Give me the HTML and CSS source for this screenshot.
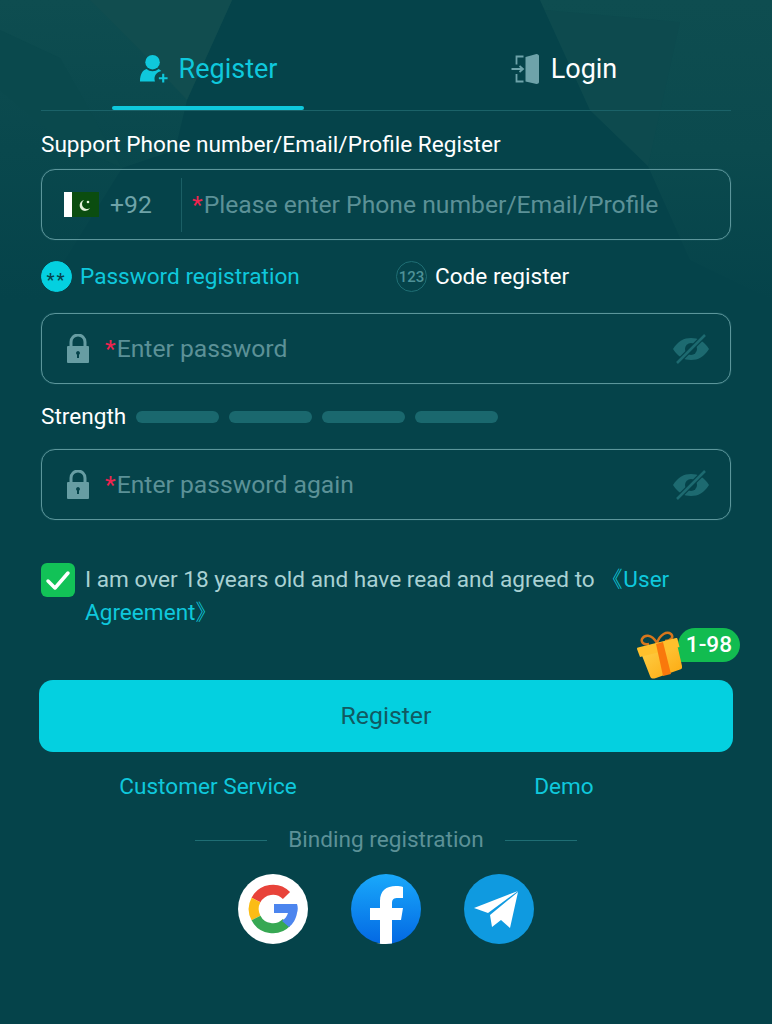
FILE: index.html
```html
<!DOCTYPE html>
<html>
<head>
    <title>Register</title>
    <link rel="stylesheet" href="styles.css">
</head>
<body>
    <svg class="backdrop" viewBox="0 0 772 300">
        <defs>
            <linearGradient id="fade_left" x1="0" y1="0" x2="0" y2="1">
                <stop offset="0" stop-color="#0e4d50"/>
                <stop offset="0.5" stop-color="#09484d"/>
                <stop offset="1" stop-color="#05434a"/>
            </linearGradient>
            <linearGradient id="fade_right" x1="0" y1="0" x2="0" y2="1">
                <stop offset="0" stop-color="#0e4d50"/>
                <stop offset="0.5" stop-color="#0b4a4e"/>
                <stop offset="1" stop-color="#05434a"/>
            </linearGradient>
        </defs>
        <polygon points="0,0 232,0 187,100 175,150 122,168 40,300 0,300" fill="url(#fade_left)"/>
        <polygon points="90,0 232,0 187,100 140,50" fill="#114d4f"/>
        <polygon points="0,30 60,58 122,168 60,140 0,90" fill="#0a494d"/>
        <polygon points="540,0 772,0 772,300 690,260 648,166 590,110" fill="url(#fade_right)"/>
        <polygon points="680,22 648,166 590,110 545,10" fill="#0d4a4e"/>
    </svg>

    <main class="page">
        <nav class="tabs">
            <a class="tab tab_active">
                <svg class="tab_icon" viewBox="0 0 32 30">
                    <circle cx="14" cy="8" r="7.500" fill="#0fc8dc"/>
                    <path d="M1 28c0-8 3-12 7-13 3 3 9 3 12 0 1 .3 2 1 3 2-4 1-7 4-7 8 0 1 .2 2 .5 3z" fill="#0fc8dc"/>
                    <path d="M25 20v9M20.500 24.500h9" stroke="#0fc8dc" stroke-width="2.200" fill="none"/>
                </svg>
                Register
            </a>
            <a class="tab">
                <svg class="tab_icon" viewBox="0 0 30 30">
                    <path d="M12 2.500H5v8M5 20v7.500h7" stroke="#6ea3aa" stroke-width="1.800" fill="none"/>
                    <path d="M0 15h11M8 12l3.500 3-3.500 3" stroke="#6ea3aa" stroke-width="1.800" fill="none"/>
                    <path d="M14 3l11-3c1.500 0 2.500 1 2.500 2v26c0 1-1 2-2.500 2l-11-2.500z" fill="#6ea3aa"/>
                </svg>
                Login
            </a>
        </nav>

        <p class="field_label">Support Phone number/Email/Profile Register</p>
        <div class="input_box">
            <div class="country">
                <svg class="flag" viewBox="0 0 35 25">
                    <rect width="35" height="25" fill="#0b4d10"/>
                    <rect width="8" height="25" fill="#fff"/>
                    <path d="M20 8a5.500 5.500 0 1 0 6 8 5 5 0 0 1-6-8z" fill="#e6f2dc"/>
                    <circle cx="24" cy="10" r="1.300" fill="#e6f2dc"/>
                </svg>
                <span>+92</span>
            </div>
            <span class="placeholder"><em>*</em>Please enter Phone number/Email/Profile</span>
        </div>

        <div class="modes">
            <a class="mode mode_active"><span class="mode_badge">**</span>Password registration</a>
            <a class="mode"><span class="mode_badge">123</span>Code register</a>
        </div>

        <div class="input_box">
            <svg class="lock" viewBox="0 0 24 30">
                <path d="M5 13V8a7 7 0 0 1 14 0v5" stroke="#679da3" stroke-width="3" fill="none"/>
                <path d="M2 12h20a1 1 0 0 1 1 1v15a1 1 0 0 1-1 1H2a1 1 0 0 1-1-1V13a1 1 0 0 1 1-1z" fill="#679da3"/>
                <path d="M12 17a2 2 0 0 1 1 3.700V24h-2v-3.300A2 2 0 0 1 12 17z" fill="#05434a"/>
            </svg>
            <span class="placeholder"><em>*</em>Enter password</span>
            <svg class="eye" viewBox="0 0 38 30">
                <path d="M1 15C6 7 12 4 19 4s13 3 18 11c-5 8-11 11-18 11S6 23 1 15z" fill="#1d6a70"/>
                <circle cx="19" cy="15" r="6" fill="#05434a"/>
                <path d="M5 29L33 1" stroke="#05434a" stroke-width="5"/>
                <path d="M5 29L33 1" stroke="#1d6a70" stroke-width="2.500"/>
            </svg>
        </div>

        <div class="strength">
            <span>Strength</span>
            <div class="strength_bars">
                <i></i><i></i><i></i><i></i>
            </div>
        </div>

        <div class="input_box">
            <svg class="lock" viewBox="0 0 24 30">
                <path d="M5 13V8a7 7 0 0 1 14 0v5" stroke="#679da3" stroke-width="3" fill="none"/>
                <path d="M2 12h20a1 1 0 0 1 1 1v15a1 1 0 0 1-1 1H2a1 1 0 0 1-1-1V13a1 1 0 0 1 1-1z" fill="#679da3"/>
                <path d="M12 17a2 2 0 0 1 1 3.700V24h-2v-3.300A2 2 0 0 1 12 17z" fill="#05434a"/>
            </svg>
            <span class="placeholder"><em>*</em>Enter password again</span>
            <svg class="eye" viewBox="0 0 38 30">
                <path d="M1 15C6 7 12 4 19 4s13 3 18 11c-5 8-11 11-18 11S6 23 1 15z" fill="#1d6a70"/>
                <circle cx="19" cy="15" r="6" fill="#05434a"/>
                <path d="M5 29L33 1" stroke="#05434a" stroke-width="5"/>
                <path d="M5 29L33 1" stroke="#1d6a70" stroke-width="2.500"/>
            </svg>
        </div>

        <div class="agree">
            <span class="check">
                <svg viewBox="0 0 34 34">
                    <path d="M7 18l7 7L27 10" stroke="#fff" stroke-width="3.500" fill="none" stroke-linecap="round" stroke-linejoin="round"/>
                </svg>
            </span>
            <p>I am over 18 years old and have read and agreed to <a>《User</a> <a>Agreement》</a></p>
        </div>

        <div class="submit_wrap">
            <div class="bonus">
                <svg class="gift" viewBox="0 0 46 50">
                    <defs>
                        <linearGradient id="gift_body" x1="0" y1="0" x2="1" y2="1">
                            <stop offset="0" stop-color="#ffd24a"/>
                            <stop offset="1" stop-color="#fca80f"/>
                        </linearGradient>
                    </defs>
                    <path d="M21 12C15 2 8 4 6 8c-1 3 1 6 7 5M21 12c3-9 10-12 14-9 3 3 0 7-6 7" stroke="#d8761c" stroke-width="2.500" fill="none"/>
                    <path d="M5 22l36-9 5 22c.4 2-.5 3-2 3.500L20 47c-3 1-5 1-6-2z" fill="url(#gift_body)"/>
                    <path d="M1 18c0-1 .5-1.500 1-1.500L40 7c1 0 1.500 .5 1.500 1l2 8L4 26z" fill="#ffc02c"/>
                    <path d="M20 13l7-2 8 32-8 2z" fill="#f9780c"/>
                </svg>
                <span class="bonus_tag">1-98</span>
            </div>
            <button class="submit">Register</button>
        </div>

        <div class="links">
            <a>Customer Service</a>
            <a>Demo</a>
        </div>

        <div class="binding">Binding registration</div>

        <div class="socials">
            <svg class="social" viewBox="0 0 70 70">
                <circle cx="35" cy="35" r="35" fill="#fff"/>
                <path d="M48.500 21.500A19 19 0 0 0 18 26" stroke="#e8433a" stroke-width="10" fill="none"/>
                <path d="M18 26A19 19 0 0 0 18 44" stroke="#fbbc15" stroke-width="10" fill="none"/>
                <path d="M18 44A19 19 0 0 0 48.500 48.500" stroke="#37a853" stroke-width="10" fill="none"/>
                <path d="M36 30h23c1 3 1 6 0 9-1 6-4 11-8 14l-7-6c3-2 5-5 6-8H36z" fill="#4c85ee"/>
            </svg>
            <svg class="social" viewBox="0 0 70 70">
                <defs>
                    <linearGradient id="fb_fill" x1="0" y1="0" x2="0" y2="1">
                        <stop offset="0" stop-color="#19a9fb"/>
                        <stop offset="1" stop-color="#0368e3"/>
                    </linearGradient>
                </defs>
                <circle cx="35" cy="35" r="35" fill="url(#fb_fill)"/>
                <path d="M29 69.500V46H19V34h10v-7c0-10 6-15 16-15 3 0 5 .3 7 1v11h-5c-4 0-6 1-6 5v5h11l-2 12h-9v23.500c-5 .7-11 .7-16 0z" fill="#fff"/>
            </svg>
            <svg class="social" viewBox="0 0 70 70">
                <circle cx="35" cy="35" r="35" fill="#0f9ae0"/>
                <path d="M10 34L54 17 24 39z" fill="#fff"/>
                <path d="M54 18L46 54 37 46 28 53 26 41z" fill="#fff"/>
            </svg>
        </div>
    </main>
</body>
</html>
```

FILE: styles.css
```css
* {
    box-sizing: border-box;
}

html, body {
    height: 100%;
}

body {
    position: relative;
    font-family: Roboto, "Liberation Sans", sans-serif;
    background-color: #05434a;
    color: #fff;
    margin: 0;
    padding: 0;
    overflow: hidden;
}

.backdrop {
    position: absolute;
    top: 0;
    left: 0;
    width: 772px;
    height: 300px;
}

.page {
    position: relative;
    padding: 0 41px;
}

p {
    margin: 0;
}

/* tabs */
.tabs {
    display: grid;
    grid-template-columns: 1fr 1fr;
    height: 111px;
    padding-top: 42px;
    border-bottom: 1px solid #1b6268;
    margin-bottom: 20px;
}

.tab {
    position: relative;
    display: flex;
    justify-content: center;
    align-items: center;
    gap: 9px;
    height: 54px;
    font-size: 27px;
}

.tab:first-child {
    margin-left: -11px;
}

.tab:last-child {
    margin-right: -11px;
}

.tab_active {
    color: #0fc8dc;
}

.tab_active::after {
    content: "";
    position: absolute;
    left: 82px;
    bottom: -14px;
    width: 192px;
    height: 4px;
    border-radius: 2px;
    background-color: #0fc8dc;
}

.tab_icon {
    width: 31px;
    height: 30px;
}

.field_label {
    font-size: 22.600px;
    line-height: 28px;
    margin-bottom: 10px;
}

/* inputs */
.input_box {
    display: flex;
    align-items: center;
    height: 71px;
    padding: 0 20px 0 23px;
    border: 1px solid #5c969b;
    box-shadow: 0 0 1px #3f7f85;
    border-radius: 14px;
    font-size: 24.700px;
}

.country {
    display: flex;
    align-items: center;
    gap: 11px;
    width: 118px;
    height: 54px;
    margin: 0 10px 0 -1px;
    border-right: 1px solid #1b5f65;
    color: #6fa3a8;
}

.flag {
    width: 35px;
    height: 25px;
}

.placeholder {
    flex: 1;
    color: #5c9197;
    white-space: nowrap;
}

.placeholder em {
    font-style: normal;
    color: #f0234f;
    letter-spacing: 1px;
}

.lock {
    width: 24px;
    height: 30px;
    margin: 0 15px 0 1px;
}

.eye {
    width: 38px;
    height: 30px;
}

/* password / code switch */
.modes {
    display: grid;
    grid-template-columns: 355px 1fr;
    align-items: center;
    height: 73px;
    font-size: 22.600px;
}

.mode {
    display: flex;
    align-items: center;
    gap: 8px;
}

.mode_active {
    color: #0fc8dc;
}

.mode_badge {
    display: flex;
    justify-content: center;
    align-items: center;
    width: 31px;
    height: 31px;
    border: 1px solid #1f6e74;
    border-radius: 50%;
    font-size: 15px;
    font-weight: 500;
    color: #4e9197;
}

.mode_active .mode_badge {
    background-color: #04d0e0;
    border-color: #04d0e0;
    color: #05434a;
    font-size: 18px;
    letter-spacing: 2px;
    padding-top: 5px;
}

.strength {
    display: flex;
    align-items: center;
    gap: 10px;
    height: 65px;
    font-size: 22.600px;
}

.strength_bars {
    display: flex;
    gap: 10px;
}

.strength_bars i {
    display: block;
    width: 83px;
    height: 12px;
    border-radius: 6px;
    background-color: #1a686e;
}

/* agreement */
.agree {
    display: flex;
    gap: 10px;
    margin-top: 43px;
    font-size: 22.600px;
    line-height: 33px;
    color: #a9d1d3;
}

.agree a {
    color: #0fc8dc;
}

.check {
    flex: none;
    width: 34px;
    height: 34px;
    border-radius: 6px;
    background-color: #12c257;
}

.check svg {
    display: block;
}

/* submit */
.submit_wrap {
    position: relative;
    margin: 51px -2px 0;
}

.bonus {
    position: absolute;
    right: -7px;
    top: -52px;
    display: flex;
    align-items: flex-start;
}

.gift {
    position: relative;
    z-index: 1;
    width: 46px;
    height: 50px;
    margin: 3px -4px 0 0;
}

.bonus_tag {
    height: 34px;
    padding: 0 8px;
    border-radius: 17px 17px 17px 4px;
    background-color: #12bc50;
    font-size: 22.600px;
    font-weight: 500;
    line-height: 33px;
}

.submit {
    display: block;
    width: 100%;
    height: 72px;
    padding: 0 0 2px;
    border: 0;
    border-radius: 14px;
    background-color: #04d0e0;
    color: #115a62;
    font-family: inherit;
    font-size: 24.800px;
}

.links {
    display: grid;
    grid-template-columns: 1fr 1fr;
    margin: 21px -11px 0;
    font-size: 22.600px;
    line-height: 28px;
    color: #0fc8dc;
    text-align: center;
}

/* third party */
.binding {
    display: flex;
    justify-content: center;
    align-items: center;
    gap: 21px;
    margin-top: 25px;
    font-size: 22.600px;
    line-height: 28px;
    color: #5c9197;
}

.binding::before,
.binding::after {
    content: "";
    width: 72px;
    height: 1px;
    background-color: #1f6e74;
}

.socials {
    display: flex;
    justify-content: center;
    gap: 43px;
    margin-top: 20px;
}

.social {
    width: 70px;
    height: 70px;
}
```
